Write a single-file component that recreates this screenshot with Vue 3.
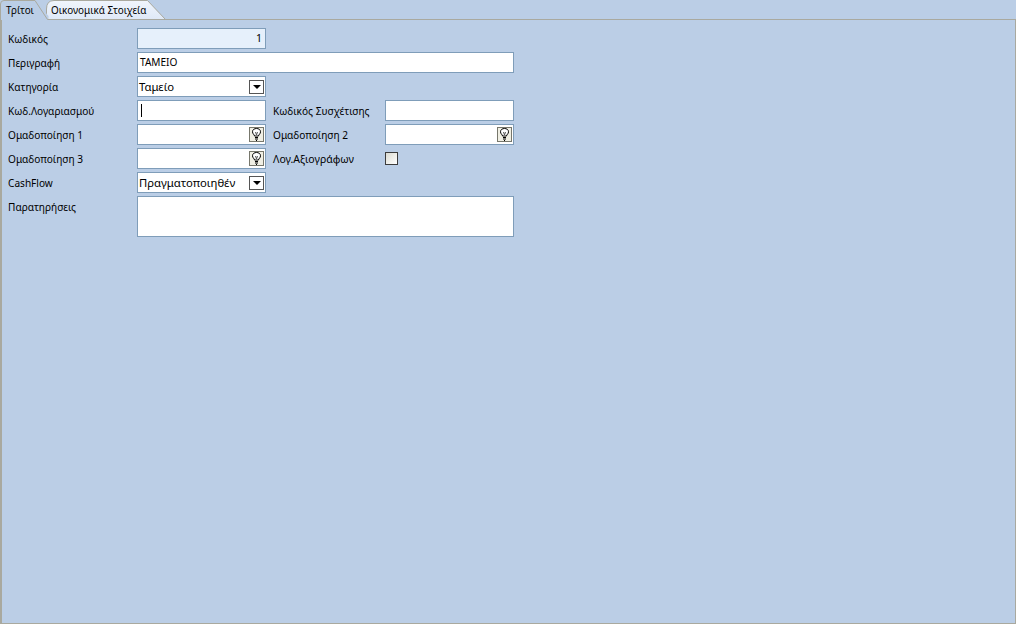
<script setup>
const lookupRows = { a: 'Ομαδοποίηση 1', b: 'Ομαδοποίηση 2', c: 'Ομαδοποίηση 3' }
</script>

<template>
  <div class="window">
    <div class="tabs">
      <svg class="tab-art" width="1016" height="20" viewBox="0 0 1016 20">
        <defs>
          <linearGradient id="tabfill" x1="0" y1="0" x2="0" y2="1">
            <stop offset="0" stop-color="#f0f5fc" />
            <stop offset="1" stop-color="#dfe9f7" />
          </linearGradient>
        </defs>
        <path d="M46.5 19.5 L46.5 9 Q46.5 0.5 54 0.5 L147.5 0.5 L165.5 19.5 Z" fill="url(#tabfill)" stroke="#a9a99f" />
        <path d="M0.5 20 L0.5 4 Q0.5 0.5 4 0.5 L35 0.5 L48.5 16 L48.5 20 Z" fill="#bbcee6" stroke="none" />
        <path d="M0.5 20 L0.5 4 Q0.5 0.5 4 0.5 L35 0.5 L47.5 19.5 L1016 19.5" fill="none" stroke="#a9a99f" />
      </svg>
      <span class="tab first">Τρίτοι</span>
      <span class="tab second">Οικονομικά Στοιχεία</span>
    </div>
    <div class="panel">
      <div class="form">
        <span class="label">Κωδικός</span>
        <div class="field code">1</div>
        <span></span><span></span>

        <span class="label">Περιγραφή</span>
        <div class="field span3">ΤΑΜΕΙΟ</div>

        <span class="label">Κατηγορία</span>
        <div class="field combo">Ταμείο
          <span class="drop"><i></i></span>
        </div>
        <span></span><span></span>

        <span class="label">Κωδ.Λογαριασμού</span>
        <div class="field"><i class="caret"></i></div>
        <span class="label second-label">Κωδικός Συσχέτισης</span>
        <div class="field"></div>

        <span class="label">{{ lookupRows.a }}</span>
        <div class="field combo">
          <span class="bulb">
            <svg width="9" height="13" viewBox="0 0 9 13"><path d="M2.5 8 C2.5 6.5 0.5 6 0.5 3.8 C0.5 1.5 2.5 0.5 4.5 0.5 C6.5 0.5 8.5 1.5 8.5 3.8 C8.5 6 6.5 6.5 6.5 8 Z" fill="#fff" stroke="#000" /><path d="M3 9.5 H6 M3 11 H6 M4 12.5 H5" stroke="#000" fill="none" /><path d="M3.5 4 L4.5 7 L5.5 4" stroke="#555" fill="none" /></svg>
          </span>
        </div>
        <span class="label second-label">{{ lookupRows.b }}</span>
        <div class="field combo">
          <span class="bulb">
            <svg width="9" height="13" viewBox="0 0 9 13"><path d="M2.5 8 C2.5 6.5 0.5 6 0.5 3.8 C0.5 1.5 2.5 0.5 4.5 0.5 C6.5 0.5 8.5 1.5 8.5 3.8 C8.5 6 6.5 6.5 6.5 8 Z" fill="#fff" stroke="#000" /><path d="M3 9.5 H6 M3 11 H6 M4 12.5 H5" stroke="#000" fill="none" /><path d="M3.5 4 L4.5 7 L5.5 4" stroke="#555" fill="none" /></svg>
          </span>
        </div>

        <span class="label">{{ lookupRows.c }}</span>
        <div class="field combo">
          <span class="bulb">
            <svg width="9" height="13" viewBox="0 0 9 13"><path d="M2.5 8 C2.5 6.5 0.5 6 0.5 3.8 C0.5 1.5 2.5 0.5 4.5 0.5 C6.5 0.5 8.5 1.5 8.5 3.8 C8.5 6 6.5 6.5 6.5 8 Z" fill="#fff" stroke="#000" /><path d="M3 9.5 H6 M3 11 H6 M4 12.5 H5" stroke="#000" fill="none" /><path d="M3.5 4 L4.5 7 L5.5 4" stroke="#555" fill="none" /></svg>
          </span>
        </div>
        <span class="label second-label wide">Λογ.Αξιογράφων</span>
        <div class="check-cell"><span class="check"></span></div>

        <span class="label">CashFlow</span>
        <div class="field combo">Πραγματοποιηθέν
          <span class="drop"><i></i></span>
        </div>
        <span></span><span></span>

        <span class="label">Παρατηρήσεις</span>
        <div class="field span3 notes"></div>
      </div>
    </div>
  </div>
</template>

<style scoped>
.window {
  width: 1016px;
  height: 624px;
  background: #bbcee6;
  font-family: "Noto Sans", "Liberation Sans", sans-serif;
  font-size: 10.1px;
  color: #000;
  display: flex;
  flex-direction: column;
}
.tabs {
  position: relative;
  height: 20px;
  flex: none;
  display: flex;
  align-items: center;
}
.tab-art {
  position: absolute;
  left: 0;
  top: 0;
}
.tab {
  position: relative;
  line-height: 21px;
  font-size: 9.9px;
}
.tab.first {
  margin-left: 6px;
  width: 45px;
}
.panel {
  flex: 1;
  border-left: 2px solid #a9a99f;
  border-right: 1px solid #a9a99f;
  border-bottom: 1px solid #a9a99f;
  padding: 8px 0 0 6px;
}
.form {
  display: grid;
  grid-template-columns: 129px 129px 119px 129px;
  grid-auto-rows: 21px;
  row-gap: 3px;
  width: 506px;
}
.label {
  line-height: 23px;
  white-space: nowrap;
}
.wide {
  font-size: 10.5px;
}
.second-label {
  padding-left: 7px;
}
.field {
  position: relative;
  border: 1px solid #7f9db9;
  background: #fff;
  padding: 0 2px;
  line-height: 19px;
  white-space: nowrap;
  box-sizing: border-box;
}
.span3 {
  grid-column: span 3;
}
.code {
  background: #e6f0fb;
  text-align: right;
  padding-right: 3px;
  font-size: 10.5px;
}
.combo {
  padding-left: 1px;
  font-size: 11.3px;
}
.notes {
  grid-row: span 2;
  height: 41px;
}
.caret {
  position: absolute;
  left: 3px;
  top: 3px;
  width: 1px;
  height: 13px;
  background: #000;
}
.drop,
.bulb {
  position: absolute;
  right: 1px;
  top: 3px;
  width: 15px;
  height: 14px;
  box-sizing: border-box;
  display: flex;
  align-items: center;
  justify-content: center;
}
.drop {
  border: 1px solid #555;
  background: #fff;
}
.drop i {
  display: block;
  width: 0;
  height: 0;
  border-left: 4px solid transparent;
  border-right: 4px solid transparent;
  border-top: 4px solid #000;
}
.bulb {
  top: 2px;
  height: 15px;
  border: 1px solid #77776c;
  background: #f0efe4;
}
.check-cell {
  display: flex;
  align-items: center;
  height: 21px;
}
.check {
  display: block;
  width: 13px;
  height: 13px;
  box-sizing: border-box;
  border: 1px solid #3c3c3c;
  background: linear-gradient(135deg, #dcdcd2, #fff);
}
</style>
